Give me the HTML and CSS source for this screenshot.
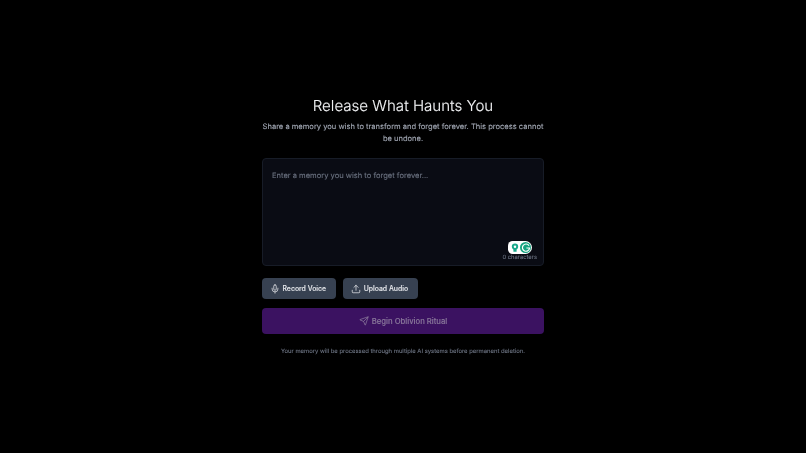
FILE: index.html
```html
<!DOCTYPE html>
<html lang="en">
<head>
    <meta charset="UTF-8">
    <title>Release What Haunts You</title>
    <link rel="stylesheet" href="styles.css">
</head>
<body>
    <main class="panel">
        <h1 class="title">Release What Haunts You</h1>
        <p class="intro">Share a memory you wish to transform and forget forever. This process cannot be undone.</p>

        <div class="memory">
            <div class="placeholder">Enter a memory you wish to forget forever...</div>
            <div class="widget">
                <span class="widget-left">
                    <svg width="8" height="10" viewBox="0 0 8 10"><path d="M4 .6a3.2 3.2 0 0 1 3.2 3.2c0 .9-.4 1.5-1 2.1L5.6 6.6v2.2H2.4V6.6L1.8 5.9c-.6-.6-1-1.2-1-2.1A3.2 3.2 0 0 1 4 .6z" fill="#1ba98c"/><circle cx="4" cy="3.7" r="1.2" fill="#fff"/></svg>
                </span>
                <span class="widget-right">
                    <svg width="10" height="10" viewBox="0 0 10 10"><path d="M8 2.6A3.6 3.6 0 1 0 8.6 5H5.4" fill="none" stroke="#fff" stroke-width="1.2"/></svg>
                </span>
            </div>
            <div class="count">0 characters</div>
        </div>

        <div class="actions">
            <button class="btn">
                <svg class="icon" viewBox="0 0 24 24"><path d="M12 2a3 3 0 0 0-3 3v7a3 3 0 0 0 6 0V5a3 3 0 0 0-3-3z"/><path d="M19 10v2a7 7 0 0 1-14 0v-2"/><path d="M12 19v3"/></svg>
                <span class="label">Record Voice</span>
            </button>
            <button class="btn">
                <svg class="icon" viewBox="0 0 24 24"><path d="M21 15v4a2 2 0 0 1-2 2H5a2 2 0 0 1-2-2v-4"/><path d="M17 8l-5-5-5 5"/><path d="M12 3v12"/></svg>
                <span class="label">Upload Audio</span>
            </button>
        </div>

        <button class="submit">
            <svg class="icon" viewBox="0 0 24 24"><path d="M14.5 21.7a.5.5 0 0 0 .9 0L22 2.6a.5.5 0 0 0-.6-.6L2.3 8.6a.5.5 0 0 0 0 .9l8 3.2a2 2 0 0 1 1.1 1.1z"/><path d="M21.9 2.1 10.9 13.1"/></svg>
            <span class="label">Begin Oblivion Ritual</span>
        </button>

        <p class="note">Your memory will be processed through multiple AI systems before permanent deletion.</p>
    </main>
</body>
</html>
```

FILE: styles.css
```css
* {
    box-sizing: border-box;
}

body {
    margin: 0;
    height: 453px;
    background-color: #000;
    font-family: Inter, "Liberation Sans", sans-serif;
    text-rendering: geometricPrecision;
    -webkit-text-stroke: 0.12px currentColor;
    display: flex;
    align-items: center;
    justify-content: center;
    overflow: hidden;
}

.panel {
    width: 282px;
    padding-bottom: 4px;
    display: flex;
    flex-direction: column;
    filter: blur(0.3px);
}

.title {
    margin: 0 0 2px;
    text-align: center;
    font-size: 15.1px;
    line-height: 26px;
    font-weight: 300;
    color: #f3f4f6;
}

.intro {
    margin: 0 0 13px;
    text-align: center;
    font-size: 7.55px;
    line-height: 12px;
    color: #a1a7b3;
}

.memory {
    position: relative;
    height: 108px;
    padding: 10px 9px;
    background-color: #0a0c14;
    border: 1px solid #171c27;
    border-radius: 4px;
    margin-bottom: 12px;
}

.placeholder {
    font-size: 7.55px;
    line-height: 13px;
    color: #6b7280;
    opacity: 0.99;
}

.widget {
    position: absolute;
    right: 11px;
    bottom: 11px;
    width: 24px;
    height: 13px;
    background-color: #fff;
    border-radius: 5px 7px 7px 5px;
    display: flex;
    align-items: center;
    justify-content: space-between;
    padding: 0 1px 0 3px;
}

.widget-left,
.widget-right {
    display: flex;
    align-items: center;
    justify-content: center;
}

.widget-right {
    width: 11px;
    height: 11px;
    border-radius: 50%;
    background-color: #15a37f;
}

.count {
    position: absolute;
    right: 6px;
    bottom: 3px;
    font-size: 5.8px;
    line-height: 8px;
    color: #6b7280;
    opacity: 0.99;
}

.actions {
    display: flex;
    gap: 7px;
    margin-bottom: 9px;
}

.btn {
    height: 21px;
    padding: 0 10px 0 8px;
    display: flex;
    align-items: center;
    gap: 2.5px;
    border: 0;
    border-radius: 4px;
    background-color: #374151;
    color: #e5e7eb;
    font-family: inherit;
    font-size: 6.9px;
    font-weight: 500;
}

.label {
    opacity: 0.99;
}

.icon {
    width: 10px;
    height: 10px;
    fill: none;
    stroke: currentColor;
    stroke-width: 1.8;
    stroke-linecap: round;
    stroke-linejoin: round;
}

.submit {
    height: 26px;
    display: flex;
    align-items: center;
    justify-content: center;
    gap: 3px;
    border: 0;
    border-radius: 4px;
    background-color: #3b1261;
    color: #8b7a9c;
    font-family: inherit;
    font-size: 7.7px;
    font-weight: 500;
}

.note {
    margin: 13px 0 0;
    text-align: center;
    font-size: 5.9px;
    line-height: 9px;
    color: #6b7280;
}
```
